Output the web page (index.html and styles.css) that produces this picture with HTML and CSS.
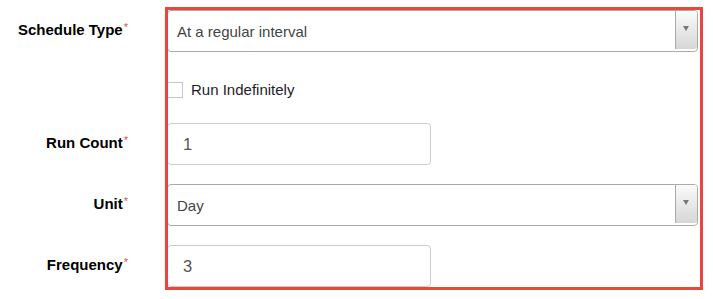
FILE: index.html
```html
<!DOCTYPE html>
<html lang="en">
<head>
    <meta charset="UTF-8">
    <meta name="viewport" content="width=device-width, initial-scale=1.0">
    <title>Schedule</title>
    <link rel="stylesheet" href="styles.css">
</head>
<body>
    <form class="schedule-form">
        <!-- Schedule Type -->
        <label class="field-label row-1">Schedule Type<span class="req">*</span></label>
        <div class="select-box row-1">
            <span class="select-value">At a regular interval</span>
            <span class="select-arrow"></span>
        </div>

        <!-- Run Indefinitely -->
        <label class="check-line row-2">
            <span class="check-box"></span>
            <span>Run Indefinitely</span>
        </label>

        <!-- Run Count -->
        <label class="field-label row-3">Run Count<span class="req">*</span></label>
        <div class="text-input row-3">1</div>

        <!-- Unit -->
        <label class="field-label row-4">Unit<span class="req">*</span></label>
        <div class="select-box row-4">
            <span class="select-value">Day</span>
            <span class="select-arrow"></span>
        </div>

        <!-- Frequency -->
        <label class="field-label row-5">Frequency<span class="req">*</span></label>
        <div class="text-input row-5">3</div>

        <div class="highlight"></div>
    </form>
</body>
</html>
```

FILE: styles.css
```css
* {
    margin: 0;
    padding: 0;
    box-sizing: border-box;
    font-family: 'Liberation Sans', Arial, sans-serif;
}

body {
    background-color: #fff;
}

.schedule-form {
    display: grid;
    grid-template-columns: 165px 538px;
    grid-template-rows: 45px 71px 42px 61px 61px 3px;
    margin-top: 7px;
}

.row-1 { grid-row: 1; }
.row-2 { grid-row: 2; }
.row-3 { grid-row: 3; }
.row-4 { grid-row: 4; }
.row-5 { grid-row: 5; }

.field-label {
    grid-column: 1;
    align-self: end;
    height: 42px;
    display: flex;
    align-items: center;
    justify-content: flex-end;
    padding-right: 37px;
    padding-bottom: 3px;
    font-size: 15px;
    font-weight: bold;
    color: #000;
}

.req {
    color: #e0524c;
    font-size: 11px;
    font-weight: normal;
    align-self: flex-start;
    margin-top: 11px;
    margin-left: 1px;
}

.select-box {
    grid-column: 2;
    align-self: end;
    height: 42px;
    margin: 0 5px 0 2px;
    border: 1px solid #aaa;
    border-radius: 4px;
    display: flex;
    align-items: stretch;
    background: #fff;
}

.select-value {
    flex: 1;
    display: flex;
    align-items: center;
    padding-left: 9px;
    font-size: 15px;
    color: #444;
}

.select-arrow {
    width: 22px;
    margin: 0 0 2px;
    border-left: 1px solid #aaa;
    border-radius: 0 3px 3px 0;
    background: linear-gradient(#fbfbfb, #d6d6d6);
    position: relative;
}

.select-arrow::after {
    content: '';
    position: absolute;
    left: 7px;
    top: 15px;
    border-left: 3.5px solid transparent;
    border-right: 3.5px solid transparent;
    border-top: 5px solid #777;
}

.text-input {
    grid-column: 2;
    align-self: end;
    width: 264px;
    height: 42px;
    margin-left: 2px;
    border: 1px solid #ccc;
    border-radius: 4px;
    display: flex;
    align-items: center;
    padding-left: 15px;
    font-size: 16.5px;
    color: #555;
}

.check-line {
    grid-column: 2;
    align-self: start;
    margin: 29px 0 0 2px;
    display: flex;
    align-items: center;
    gap: 8px;
    font-size: 15px;
    color: #1c1c2a;
}

.check-box {
    width: 16px;
    height: 16px;
    border: 1px solid #c8c8c8;
    background: #fff;
}

/* Marcação vermelha */
.highlight {
    grid-column: 2;
    grid-row: 1 / 7;
    border: 3px solid #e8473f;
    pointer-events: none;
}
```
